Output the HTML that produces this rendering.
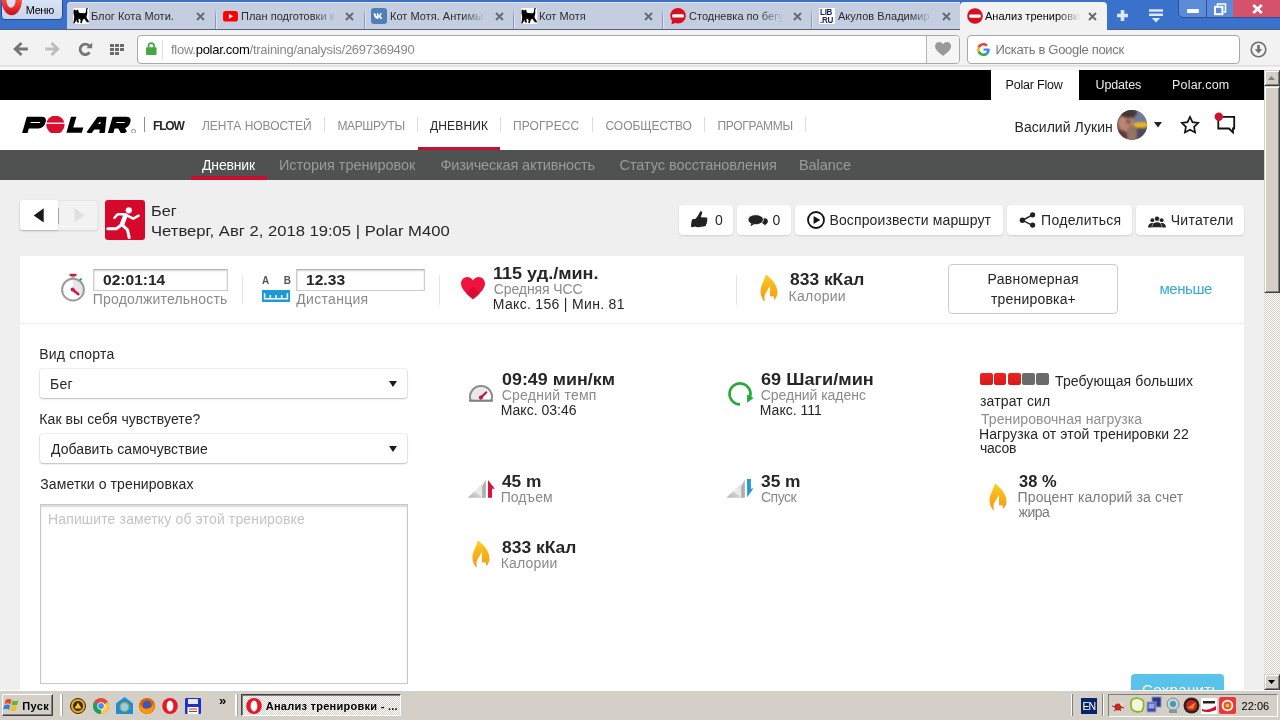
<!DOCTYPE html>
<html><head><meta charset="utf-8"><style>
*{box-sizing:border-box;margin:0;padding:0}
html,body{width:1280px;height:720px;overflow:hidden;background:#efefef;font-family:"Liberation Sans",sans-serif;color:#222}
.a{position:absolute}
.t{position:absolute;white-space:nowrap;line-height:1;opacity:.999}
svg{position:absolute;overflow:visible}
/* chrome */
#tabbar{left:0;top:0;width:1280px;height:30px;background:#3a72cb}
.tab{position:absolute;top:2px;height:27px;width:148px;background:#c4cee0;box-shadow:inset 0 1px 0 #dfe6f2}
.tab.act{background:#f2f2f2;height:28px;box-shadow:none;border-radius:4px 4px 0 0}
.tab .tt{opacity:.999;position:absolute;left:24px;top:6px;width:95px;height:17px;font-size:11px;letter-spacing:.02px;color:#2b2b2b;white-space:nowrap;line-height:17px;overflow:hidden}
.tab .fd{position:absolute;left:97px;top:6px;width:24px;height:17px;background:linear-gradient(90deg,rgba(196,206,224,0),#c4cee0)}
.tab.act .fd{background:linear-gradient(90deg,rgba(242,242,242,0),#f2f2f2)}
.tab svg.x{left:129px;top:10px}
.tab .fav{position:absolute;left:6px;top:6px;width:16px;height:16px}
#toolbar{left:0;top:29px;width:1280px;height:41px;background:linear-gradient(#f2f2f2 0,#f2f2f2 36px,#e2e2e2 36.5px,#e8e8e8 37.5px,#fafafa 38px,#f6f6f6 41px)}
.ibox{position:absolute;top:35px;height:28.500px;background:#fff;border:1px solid #a9a9a9;border-radius:4px}
/* page */
#black{left:0;top:70px;width:1264px;height:30px;background:#000}
#head{left:0;top:100px;width:1264px;height:50px;background:#fff}
#sub{left:0;top:150px;width:1264px;height:30px;background:#505252}
#task{left:0;top:690px;width:1280px;height:30px;background:#d4d0c8;border-top:1px solid #fff}
.btn{position:absolute;background:#fff;border-radius:4px;box-shadow:0 1px 2px rgba(0,0,0,.13);height:30px;top:205px}
.sep{position:absolute;width:1px;background:#dcdcdc}
.inp{position:absolute;background:#fff;border:1px solid #cdcdcd;border-top-color:#b4b4b4;box-shadow:inset 0 1px 2px rgba(0,0,0,.17),inset 1px 0 1px rgba(0,0,0,.05)}
.sel{position:absolute;left:40px;width:367px;height:29px;background:#fff;border-radius:3px;box-shadow:0 1px 2px rgba(0,0,0,.22),0 0 0 1px rgba(0,0,0,.05)}
.sel:after{content:"";position:absolute;right:10px;top:11.600px;border:4.300px solid transparent;border-top:6.200px solid #1c1c1c;border-bottom:0}
.sb{width:16px;background:#d4d0c8;border:1px solid;border-color:#d4d0c8 #404040 #404040 #d4d0c8;box-shadow:inset 1px 1px 0 #fff,inset -1px -1px 0 #808080}
.raised{background:#d4d0c8;border:1px solid;border-color:#fff #404040 #404040 #fff;box-shadow:inset -1px -1px 0 #808080}
.sunken{border:1px solid;border-color:#808080 #fff #fff #808080}
</style></head><body>
<!-- ======= browser chrome ======= -->
<div id="tabbar" class="a"></div>
<div id="toolbar" class="a"></div>
<!-- tabbar bottom line -->
<div class="a" style="left:0;top:29px;width:1280px;height:1px;background:#55617a"></div>
<!-- menu button -->
<div class="a" style="left:1px;top:-2px;width:62px;height:21.500px;background:linear-gradient(#dbe5f5,#c6d4ec);border:1px solid #274b96;border-radius:0 0 4px 4px;overflow:hidden"></div>
<svg style="left:0;top:0" width="24" height="18" viewBox="0 0 24 18"><defs><linearGradient id="og" x1="0" y1="0" x2="0" y2="1"><stop offset="0" stop-color="#ff4a3a"/><stop offset="1" stop-color="#c80f1e"/></linearGradient></defs><path fill-rule="evenodd" fill="url(#og)" d="M1.5 0a10.2 15.2 0 0 0 20.4 0zM6.4 0a4.6 7.8 0 0 0 9.2 0z"/></svg>
<!-- tabs -->
<div class="tab" style="left:67px;width:149px;border-radius:4px 0 0 0"><svg class="fav" viewBox="0 0 16 16" style="left:6px;top:6px" width="16" height="16"><use href="#cat"/></svg><div class="tt">Блог Кота Моти.</div><svg class="x" width="9" height="9"><use href="#cx"/></svg></div>
<div class="tab" style="left:216px;width:149px"><svg style="left:6.500px;top:9px" width="15" height="10.500" viewBox="0 0 17 12"><rect width="17" height="12" rx="3" fill="#f00"/><path d="M6.7 3.2v5.6L11.5 6z" fill="#fff"/></svg><div class="tt" style="left:25px">План подготовки к</div><div class="fd"></div><svg class="x" width="9" height="9"><use href="#cx"/></svg></div>
<div class="tab" style="left:365px;width:149px"><svg style="left:6px;top:6px" width="16" height="16" viewBox="0 0 16 16"><rect width="16" height="16" rx="3" fill="#4f7fb8"/><path d="M2.6 5.2h1.7c.3 1.6 1 2.7 1.6 3V5.2h1.6v2.3c.8-.1 1.5-1.2 1.8-2.3h1.6c-.3 1.4-1.200 2.3-1.700 2.700.6.400 1.600 1.300 2.100 3h-1.800c-.400-1.100-1.200-1.900-2-2v2h-.5c-2.600 0-4.100-1.800-4.400-5.700z" fill="#fff"/></svg><div class="tt" style="left:25px">Кот Мотя. Антимы</div><div class="fd"></div><svg class="x" width="9" height="9" style="left:130px"><use href="#cx"/></svg></div>
<div class="tab" style="left:514px;width:149px"><svg class="fav" viewBox="0 0 16 16" style="left:7px;top:6px" width="16" height="16"><use href="#cat"/></svg><div class="tt" style="left:25px">Кот Мотя</div><svg class="x" width="9" height="9" style="left:130px"><use href="#cx"/></svg></div>
<div class="tab" style="left:663px;width:149px"><svg style="left:7px;top:6px" width="16" height="17" viewBox="0 0 16 17"><use href="#pf"/></svg><div class="tt" style="left:26px">Стодневка по бегу</div><div class="fd"></div><svg class="x" width="9" height="9" style="left:130px"><use href="#cx"/></svg></div>
<div class="tab" style="left:812px;width:148px"><div class="a" style="left:7px;top:6px;width:16px;height:16px;background:#fff"></div><div class="t" style="left:7.5px;top:6px;font-size:8.5px;font-weight:bold;color:#1b1f5a;letter-spacing:-.3px;line-height:8px;transform:scaleX(.95);transform-origin:0 0">LIB<br>.RU</div><div class="tt" style="left:26px">Акулов Владимир I</div><div class="fd"></div><svg class="x" width="9" height="9" style="left:130px"><use href="#cx"/></svg></div>
<div class="tab act" style="left:960px;width:147px"><svg style="left:7px;top:6px" width="16" height="16" viewBox="0 0 16 16"><circle cx="8" cy="8" r="7.800" fill="#d80f1e"/><rect x="2.200" y="6.400" width="11.600" height="3.400" rx="1.200" fill="#fff"/></svg><div class="tt" style="left:25px;color:#000">Анализ тренировки</div><div class="fd"></div><svg class="x" width="9" height="9" style="left:128px"><use href="#cx"/></svg></div>
<div class="a" style="left:215px;top:8px;width:1px;height:21px;background:linear-gradient(rgba(140,152,180,0),#8c98b4 40%)"></div><div class="a" style="left:216px;top:8px;width:1px;height:21px;background:linear-gradient(rgba(220,227,240,0),#dce3f0 40%)"></div><div class="a" style="left:364px;top:8px;width:1px;height:21px;background:linear-gradient(rgba(140,152,180,0),#8c98b4 40%)"></div><div class="a" style="left:365px;top:8px;width:1px;height:21px;background:linear-gradient(rgba(220,227,240,0),#dce3f0 40%)"></div><div class="a" style="left:513px;top:8px;width:1px;height:21px;background:linear-gradient(rgba(140,152,180,0),#8c98b4 40%)"></div><div class="a" style="left:514px;top:8px;width:1px;height:21px;background:linear-gradient(rgba(220,227,240,0),#dce3f0 40%)"></div><div class="a" style="left:662px;top:8px;width:1px;height:21px;background:linear-gradient(rgba(140,152,180,0),#8c98b4 40%)"></div><div class="a" style="left:663px;top:8px;width:1px;height:21px;background:linear-gradient(rgba(220,227,240,0),#dce3f0 40%)"></div><div class="a" style="left:811px;top:8px;width:1px;height:21px;background:linear-gradient(rgba(140,152,180,0),#8c98b4 40%)"></div><div class="a" style="left:812px;top:8px;width:1px;height:21px;background:linear-gradient(rgba(220,227,240,0),#dce3f0 40%)"></div>
<svg width="0" height="0"><defs>
<path id="cx" d="M1 1L8 8M8 1L1 8" stroke="#656a75" stroke-width="1.900" fill="none"/>
<g id="cat"><rect width="16" height="16" fill="#fff"/><path d="M.9 1.200l1.500 1.100 1.500-.1 1.300-1 .2 2.400 1.200 1.300 4.300.3c1.200 0 1.900-.6 2-1.800l.2-2.300c.1-.8.600-1.200 1.400-1.100l.5.900c-.600 0-.8.400-.8 1l.1 3.200c0 1.300-.3 2.400-.9 3.200l.6 2.300 2 2.900-.6 1-1.400-.3-2.200-2.700-.6-1-1.300 1.300-1.200 3.500-1.400-.2.300-2.900-.6-1.300-1.400-.1-.2 1.800.8 1.700-1.300.4-1.300-1.300-.3-2-.8 2.400-1.400 1.900-.9-.5.700-2.900.3-3.700C.8 6.500.4 5.200.5 3.800z" fill="#000"/></g>
<g id="pf"><circle cx="8" cy="7.800" r="7.800" fill="#d80f1e"/><path d="M2 12l-.5 4.500 4.500-2z" fill="#d80f1e"/><rect x="2.200" y="6.200" width="11.600" height="3.400" rx="1.200" fill="#fff"/></g>
</defs></svg>
<!-- new tab + menu -->
<svg style="left:1117px;top:10px" width="11" height="11"><path d="M5.500 0v11M0 5.500h11" stroke="#dbe8fb" stroke-width="3.600"/></svg>
<svg style="left:1149px;top:9px" width="14" height="14"><path d="M0 1.500h14M0 5.700h14" stroke="#dbe8fb" stroke-width="2.600"/><path d="M2.800 9h8.400L7 13.400z" fill="#dbe8fb"/></svg>
<!-- window controls -->
<div class="a" style="left:1178px;top:-2px;width:102px;height:20px;background:#5a8bd6;border:1px solid #2c4f98;border-radius:0 0 0 5px"></div>
<div class="a" style="left:1206px;top:0;width:1px;height:18px;background:#2c4f98"></div>
<div class="a" style="left:1233px;top:0;width:47px;height:17px;background:#d4526b"></div>
<svg style="left:1187px;top:9px" width="12" height="4"><rect width="12" height="4" rx="1" fill="#fff"/></svg>
<svg style="left:1214px;top:3px" width="12" height="12"><path d="M3.500 3V1h8v8h-2" fill="none" stroke="#fff" stroke-width="1.600"/><rect x="1" y="3.800" width="7.400" height="7.400" fill="none" stroke="#fff" stroke-width="2"/></svg>
<svg style="left:1252px;top:4px" width="11" height="10"><path d="M1.200 1L9.800 9M9.800 1L1.200 9" stroke="#fff" stroke-width="2.800"/></svg>
<!-- toolbar icons -->
<svg style="left:14px;top:42px" width="14" height="14"><path d="M7.500 1L1.200 7l6.300 6M1.800 7h12" fill="none" stroke="#757575" stroke-width="2.800" stroke-linejoin="miter"/></svg>
<svg style="left:45px;top:42px" width="14" height="14"><path d="M6.500 1l6.300 6-6.300 6M12.200 7h-12" fill="none" stroke="#bdbdbd" stroke-width="2.800"/></svg>
<svg style="left:78px;top:42px" width="15" height="15"><path d="M11.600 10.300a5.200 5.200 0 1 1-.3-6.300" fill="none" stroke="#757575" stroke-width="2.800"/><path d="M8.300 6.200h5.900V.4z" fill="#757575"/></svg>
<svg style="left:110px;top:44px" width="14" height="11" fill="#6b6b6b"><rect x="0" y="0" width="4" height="3"/><rect x="5" y="0" width="4" height="3"/><rect x="10" y="0" width="4" height="3"/><rect x="0" y="4" width="4" height="3"/><rect x="5" y="4" width="4" height="3"/><rect x="10" y="4" width="4" height="3"/><rect x="0" y="8" width="4" height="3"/><rect x="5" y="8" width="4" height="3"/></svg>
<!-- url box -->
<div class="ibox" style="left:136.500px;width:823.500px"></div>
<svg style="left:146px;top:41.800px" width="10.600" height="13.400" viewBox="0 0 11 14"><path d="M2.600 6V4a2.900 2.900 0 0 1 5.800 0v2" fill="none" stroke="#45a845" stroke-width="1.800"/><rect x="0" y="5.600" width="11" height="8" rx="1" fill="#45a845"/></svg>
<div class="a" style="left:162px;top:40px;width:1px;height:20px;background:#e0e0e0"></div>
<div class="a" style="left:926px;top:36px;width:1px;height:27px;background:#b4b4b4"></div>
<div class="a" style="left:927px;top:36px;width:32px;height:26.500px;background:#f5f5f5;border-radius:0 3px 3px 0"></div>
<svg style="left:935px;top:41.800px" width="16.200" height="14" viewBox="0 0 16 14"><path d="M8 14C3 10 0 7.500 0 4.200 0 1.800 1.800 0 4.100 0 5.700 0 7.200.9 8 2.300 8.800.9 10.300 0 11.900 0 14.200 0 16 1.800 16 4.200 16 7.500 13 10 8 14z" fill="#9a9a9a"/></svg>
<!-- search box -->
<div class="ibox" style="left:967px;width:273px"></div>
<svg style="left:977px;top:43px" width="13" height="13" viewBox="0 0 48 48"><path fill="#EA4335" d="M24 9.500c3.540 0 6.710 1.220 9.210 3.600l6.850-6.850C35.900 2.380 30.470 0 24 0 14.620 0 6.510 5.380 2.560 13.220l7.980 6.190C12.430 13.720 17.740 9.500 24 9.500z"/><path fill="#4285F4" d="M46.980 24.550c0-1.570-.15-3.090-.38-4.550H24v9.020h12.940c-.58 2.960-2.260 5.480-4.780 7.180l7.730 6c4.510-4.180 7.090-10.360 7.090-17.650z"/><path fill="#FBBC05" d="M10.530 28.590c-.48-1.450-.76-2.990-.76-4.590s.27-3.140.76-4.590l-7.980-6.190C.92 16.460 0 20.120 0 24c0 3.880.92 7.540 2.560 10.780l7.970-6.190z"/><path fill="#34A853" d="M24 48c6.480 0 11.930-2.130 15.890-5.810l-7.730-6c-2.150 1.450-4.920 2.300-8.160 2.300-6.260 0-11.570-4.220-13.470-9.910l-7.980 6.190C6.510 42.620 14.620 48 24 48z"/></svg>
<!-- download -->
<svg style="left:1250px;top:41px" width="17" height="17"><circle cx="8.500" cy="8.500" r="7.300" fill="none" stroke="#6f6f6f" stroke-width="1.600"/><path d="M7.200 4h2.600v4.200h2.400L8.500 12.500 4.800 8.200h2.400z" fill="#6f6f6f"/></svg>

<!-- ======= page ======= -->
<div id="black" class="a"></div>
<div id="head" class="a"></div>
<div id="sub" class="a"></div>
<!-- black bar tab -->
<div class="a" style="left:991px;top:70px;width:88px;height:30px;background:#fff"></div>
<!-- nav separators -->
<div class="sep" style="left:144px;top:117px;height:15px;background:#8e8e8e"></div>
<div class="sep" style="left:324px;top:117px;height:15px"></div>
<div class="sep" style="left:417px;top:117px;height:15px"></div>
<div class="sep" style="left:500px;top:117px;height:15px"></div>
<div class="sep" style="left:592px;top:117px;height:15px"></div>
<div class="sep" style="left:704px;top:117px;height:15px"></div>
<div class="sep" style="left:805px;top:117px;height:15px"></div>
<div class="a" style="left:418px;top:146.500px;width:82px;height:3.500px;background:#c5102f"></div>
<div class="a" style="left:190.500px;top:176.400px;width:76.500px;height:3.600px;background:#c5102f"></div>
<!-- polar logo -->
<svg style="left:22px;top:116px;overflow:hidden" width="115" height="17.3" viewBox="0 0 115 17.3"><g transform="translate(4.800 0) skewX(-16)" fill="none" stroke="#000" stroke-width="5.400" stroke-linejoin="miter"><path d="M2.900 17.200V3.400H15Q17.900 3.400 17.900 6.500T15 9.700H5"/><path d="M47.100 .7V14.100H59.800"/><path d="M66.800 17.200L72.700 3.400H77.700L80.200 17.200M70 10.700H79"/><path d="M88.700 17.200V3.400H99.700Q102.600 3.400 102.600 6.500T99.700 9.700H91M97 10.500L102.500 17.200"/></g><circle cx="33.400" cy="8.800" r="9.200" fill="#d8102e"/><rect x="23.800" y="6.600" width="19.500" height="1.300" fill="#fff"/><circle cx="111.600" cy="15.300" r="2" fill="none" stroke="#444" stroke-width=".6"/></svg>
<!-- avatar -->
<div class="a" style="left:1117px;top:110px;width:30px;height:30px;border-radius:50%;overflow:hidden;background:#6e5650"><div class="a" style="left:0;top:0;width:30px;height:30px;filter:blur(1.200px)"><div class="a" style="left:17px;top:-3px;width:16px;height:17px;background:#6f7d9c"></div><div class="a" style="left:18px;top:16px;width:14px;height:12px;background:#4b4a5c"></div><div class="a" style="left:16px;top:11.500px;width:16px;height:6.500px;border-radius:45%;background:#e9b424"></div><div class="a" style="left:1px;top:4px;width:16px;height:18px;border-radius:50%;background:#b98672"></div><div class="a" style="left:3px;top:-2px;width:17px;height:10px;border-radius:50%;background:#46363a"></div><div class="a" style="left:10px;top:15px;width:10px;height:16px;border-radius:45%;background:#927566"></div><div class="a" style="left:-2px;top:20px;width:12px;height:12px;border-radius:50%;background:#64383a"></div><div class="a" style="left:9px;top:9px;width:5px;height:5px;border-radius:50%;background:#8a5a50"></div></div></div>
<svg style="left:1154px;top:122px" width="8" height="6"><path d="M0 0H8L4 5.600z" fill="#222"/></svg>
<svg style="left:1180px;top:115px" width="20" height="19" viewBox="0 0 20 19"><path d="M10 1.900l2.500 5.200 5.700.8-4.100 4 1 5.600L10 14.800l-5.100 2.700 1-5.600-4.100-4 5.700-.8z" fill="none" stroke="#111" stroke-width="1.700" stroke-linejoin="miter"/></svg>
<svg style="left:1214px;top:112px" width="23" height="23" viewBox="0 0 23 23"><path d="M4.300 8V16.500H15L19 20.400V16.500H20.200V4.800H9" fill="none" stroke="#111" stroke-width="1.800"/><circle cx="4.800" cy="4.800" r="4.200" fill="#d0102e"/></svg>
<!-- white panel -->
<div class="a" style="left:20px;top:256px;width:1224px;height:434px;background:#fff"></div>
<div class="a" style="left:20px;top:323px;width:1224px;height:1px;background:#ececec"></div>
<!-- prev/next -->
<div class="a" style="left:20px;top:200px;width:78px;height:30px;background:#f2f2f2;border-radius:3px;box-shadow:0 1px 2px rgba(0,0,0,.13);border-top:1px solid #e6e6e6;border-right:1px solid #e9e9e9"></div><div class="a" style="left:58px;top:226px;width:39px;height:1px;background:#fafafa"></div>
<div class="a" style="left:20px;top:200px;width:38px;height:30px;background:#fff;border-radius:3px 0 0 3px;box-shadow:0 1px 2px rgba(0,0,0,.15)"></div>
<div class="a" style="left:58px;top:208px;width:1px;height:16px;background:#a2a2a2"></div><svg style="left:33px;top:207.500px" width="12" height="15"><path d="M10.700 0.300V14.500L0.700 7.400Z" fill="#1a1a1a"/></svg>
<svg style="left:74px;top:207.500px" width="12" height="15"><path d="M0.500 0.300V14.500L10.700 7.400Z" fill="#e0e0e0"/></svg>
<!-- sport icon -->
<div class="a" style="left:105px;top:200px;width:40px;height:40px;background:#d6092c;border-radius:3px"></div>
<svg style="left:105px;top:200px" width="40" height="40" viewBox="0 0 40 40" fill="none" stroke="#fff" stroke-linecap="round" stroke-linejoin="round"><circle cx="23.800" cy="10.300" r="3.100" fill="#fff" stroke="none"/><path d="M20.500 15.300L17 24.500" stroke-width="4.600"/><path d="M18.500 14.300H12.600L9.400 17.800" stroke-width="2.500"/><path d="M22.300 15.600L28.300 18.700 33.700 15.700" stroke-width="2.500"/><path d="M16.300 25L11.300 28.700H2.800" stroke-width="3"/><path d="M18 25.600L22.500 29.900 24.200 37.600" stroke-width="3"/></svg>

<!-- action buttons -->
<div class="btn" style="left:679px;width:54px"></div>
<div class="btn" style="left:737px;width:54px"></div>
<div class="btn" style="left:795px;width:208px"></div>
<div class="btn" style="left:1007px;width:125px"></div>
<div class="btn" style="left:1136px;width:108px"></div>
<!-- thumb -->
<svg style="left:691px;top:211px" width="17" height="18" viewBox="0 0 17 18"><path d="M9.400 0.300c1.300-.5 2 .4 1.700 1.600L9.800 6.300l5.400.3c1.400.1 1.700 1.700.6 2.300.9.600.7 1.900-.2 2.300.6.700.3 1.900-.6 2.100.4.900-.1 1.900-1.200 2l-6.200.9c-1.600.2-2.700-.2-3.600-.7l-2.700.8C.4 16.600-.2 15.200.1 13.200l.6-3.400c.2-1.200.9-1.800 2-1.800h1.600C6.100 6.300 7.600 3.500 9.400.3z" fill="#222"/></svg>
<!-- comments -->
<svg style="left:748px;top:214px" width="20" height="13" viewBox="0 0 20 13"><circle cx="16.800" cy="7.300" r="3" fill="#222"/><path d="M17 9.500l1.300 2.300-2.800-1.500z" fill="#222"/><ellipse cx="7.700" cy="5.700" rx="7.700" ry="5" fill="#222" stroke="#fff" stroke-width=".8"/><path d="M3.200 9l-.6 3.200 3.400-2z" fill="#222"/></svg>
<!-- play -->
<svg style="left:807px;top:211px" width="18" height="18" viewBox="0 0 18 18"><circle cx="9" cy="9" r="8" fill="none" stroke="#111" stroke-width="1.800"/><path d="M6.600 5v8L13.300 9z" fill="#111"/></svg>
<!-- share -->
<svg style="left:1019px;top:212px" width="17" height="16" viewBox="0 0 17 16"><path d="M13.500 2.800L3.500 8.300l10 5" fill="none" stroke="#222" stroke-width="1.500"/><circle cx="3.400" cy="8.300" r="2.700" fill="#222"/><circle cx="13.600" cy="2.800" r="2.600" fill="#222"/><circle cx="13.600" cy="13.100" r="2.600" fill="#222"/></svg>
<!-- readers -->
<svg style="left:1148px;top:216px" width="18" height="12" viewBox="0 0 18 12" fill="#222"><circle cx="4.300" cy="4.200" r="1.900"/><path d="M0 11.500c.3-3 1.500-4.500 4.300-4.500 1.200 0 2 .4 2.600 1L5 11.500z"/><circle cx="13.700" cy="4.200" r="1.900"/><path d="M18 11.500c-.3-3-1.500-4.500-4.300-4.500-1.200 0-2 .4-2.600 1l1.900 3.500z"/><circle cx="9" cy="2.700" r="2.500" stroke="#fff" stroke-width=".5"/><path d="M3.800 11.500c.4-3.600 2-5.500 5.200-5.500s4.800 1.900 5.200 5.500z" stroke="#fff" stroke-width=".5"/></svg>

<!-- summary -->
<div class="inp" style="left:93px;top:269px;width:135px;height:22px"></div>
<div class="inp" style="left:296px;top:269px;width:129px;height:22px"></div>
<div class="sep" style="left:242px;top:275px;height:29px;background:#e4e4e4"></div>
<div class="sep" style="left:439px;top:275px;height:30px;background:#e4e4e4"></div>
<div class="sep" style="left:736px;top:275px;height:30px;background:#e4e4e4"></div>
<div class="a" style="left:948px;top:264px;width:170px;height:50px;background:#fff;border:1px solid #cdcdcd;border-radius:4px"></div>
<svg width="0" height="0"><defs>
<linearGradient id="fg" x1="0" y1="0" x2="0" y2="1"><stop offset="0" stop-color="#f7d21e"/><stop offset=".45" stop-color="#f9b41a"/><stop offset="1" stop-color="#f59a18"/></linearGradient>
<path id="flame" d="M5.800 .4C4.600 5.500 2.600 8.800 1.300 12.500-.5 17.500.6 22.800 4 27c.4.300.9.200.9-.3-.9-3.200-.4-6 1.500-8.800 1.600-2.400 2.800-4.200 3.300-6.100.6 2.300.3 5 .2 7.400-.1 1.500 0 2.700.6 3.300l3.300-.2c.2 1.200 0 2.500.5 3.700 2.600-2.600 3.800-6.200 2.900-10.300C16 9.600 11.500 4.400 5.800.4z" fill="url(#fg)"/>
</defs></svg>
<!-- stopwatch -->
<svg style="left:60px;top:272px" width="27" height="31" viewBox="0 0 27 31"><path d="M13 17.700V6.800A10.900 10.900 0 0 1 21.700 24.200z" fill="#e6e6e6"/><circle cx="13" cy="17.700" r="10.900" fill="none" stroke="#9b9b9b" stroke-width="2"/><rect x="11.400" y="3.800" width="3.200" height="3.200" fill="#a8a8a8"/><rect x="9.600" y="1.800" width="6.800" height="2.400" rx=".5" fill="#c4204e"/><path d="M19.800 8.200l1.800-1.600" stroke="#2a9ab0" stroke-width="2.200"/><circle cx="12.600" cy="17.600" r="2" fill="#c4204e"/><path d="M12.600 17.600l5.700 4.600" stroke="#c4204e" stroke-width="2.600" stroke-linecap="round"/></svg>
<!-- ruler -->
<div class="a" style="left:262px;top:290px;width:28px;height:12px;background:#1d9ad6"></div>
<svg style="left:262px;top:290px" width="28" height="12"><path d="M2.600 3.300V8.800H25.400V3.300M8.300 5V8.800M14 5V8.800M19.700 5V8.800" fill="none" stroke="#fff" stroke-width="1.500"/></svg>
<!-- heart -->
<svg style="left:461px;top:276.500px" width="24" height="22.500" viewBox="0 0 24 22.500"><defs><clipPath id="hc"><path d="M12 22.500C4 15.500 0 11.500 0 6.600 0 2.900 2.800 0 6.300 0 8.700 0 10.900 1.400 12 3.500 13.100 1.400 15.300 0 17.700 0 21.200 0 24 2.900 24 6.600c0 4.900-4 8.900-12 15.900z"/></clipPath></defs><g clip-path="url(#hc)"><rect width="24" height="23" fill="#f0123e"/><path d="M12 9.500l11 11H1z" fill="#d60e35"/></g></svg>
<!-- flame summary -->
<svg style="left:760px;top:274px" width="19" height="28" viewBox="0 0 19 28"><use href="#flame"/></svg>

<!-- form -->
<div class="sel" style="top:369px"></div>
<div class="sel" style="top:434px"></div>
<div class="inp" style="left:40px;top:504px;width:368px;height:180px;box-shadow:inset 0 2px 2px rgba(0,0,0,.16);border-color:#c8c8c8"></div>
<!-- load squares -->
<div class="a" style="left:980px;top:373.200px;width:12.600px;height:12.300px;background:linear-gradient(#ee2222,#d61a1a);border-radius:2px"></div>
<div class="a" style="left:993.8px;top:373.200px;width:12.600px;height:12.300px;background:linear-gradient(#ee2222,#d61a1a);border-radius:2px"></div>
<div class="a" style="left:1008px;top:373.200px;width:12.600px;height:12.300px;background:linear-gradient(#ee2222,#d61a1a);border-radius:2px"></div>
<div class="a" style="left:1022.4px;top:373.200px;width:12.600px;height:12.300px;background:#6a6a6a;border-radius:2px"></div>
<div class="a" style="left:1036.2px;top:373.200px;width:12.600px;height:12.300px;background:#6a6a6a;border-radius:2px"></div>
<!-- gauge -->
<svg style="left:468px;top:384px" width="26" height="19" viewBox="0 0 26 19"><path d="M13 13.500L2.600 16.200A11 11 0 0 1 19.500 4.200z" fill="#e9e9e9"/><path d="M2.640 16.700A11 11 0 1 1 23.360 16.700" fill="none" stroke="#8c8c8c" stroke-width="2"/><path d="M1.200 16.700H24.800" stroke="#808080" stroke-width="2.200"/><circle cx="12.900" cy="13.600" r="2.100" fill="#c4184a"/><path d="M12.900 13.600L18.300 8.300" stroke="#c4184a" stroke-width="2.200" stroke-linecap="round"/></svg>
<!-- cadence -->
<svg style="left:727px;top:381px" width="27" height="26" viewBox="0 0 27 26"><path d="M13 23.400A10.500 10.500 0 1 1 22.900 16.400" fill="none" stroke="#25ab35" stroke-width="2.600"/><path d="M20 13.500l6.600 3.600-6.400 4.700z" fill="#25ab35"/></svg>
<!-- ascent -->
<svg style="left:467px;top:479px" width="29" height="20" viewBox="0 0 29 20"><defs><linearGradient id="tg" x1="0" y1="1" x2=".6" y2=".2"><stop offset="0" stop-color="#b4b4b4"/><stop offset=".45" stop-color="#cfcfcf"/><stop offset=".55" stop-color="#ececec"/><stop offset="1" stop-color="#e4e4e4"/></linearGradient></defs><path d="M.8 18.700L18.800 1V18.700z" fill="url(#tg)"/><path d="M15.200 8V18.700H18.800V1z" fill="#aab0ad"/><path d="M21 1l6.800 8.700H25V18.700H21z" fill="#e0113c"/></svg>
<!-- descent -->
<svg style="left:726px;top:478px" width="29" height="21" viewBox="0 0 29 21"><path d="M.3 19.700L18.800 2V19.700z" fill="url(#tg)"/><path d="M15.200 9V19.700H18.800V2z" fill="#aeaeae"/><path d="M21 1H24.900V10.700L27.500 10.200 21.200 19.200z" fill="#2499d9"/></svg>
<!-- flames -->
<svg style="left:988.500px;top:483px" width="19" height="28" viewBox="0 0 19 28"><use href="#flame"/></svg>
<svg style="left:471.500px;top:540px" width="19" height="28" viewBox="0 0 19 28"><use href="#flame"/></svg>

<!-- save button -->
<div class="a" style="left:1131px;top:674px;width:93px;height:16px;background:#5ac3ec;border-radius:4px 4px 0 0;overflow:hidden"><div class="t" style="left:11px;top:8px;font-size:15px;color:#fff;letter-spacing:.35px">Сохранить</div></div>

<!-- scrollbar -->
<div class="a" style="left:1264px;top:70px;width:16px;height:620px;background-color:#ebe9e4;background-image:conic-gradient(#fff 25%,#d4d0c8 0 50%,#fff 0 75%,#d4d0c8 0);background-size:2px 2px"></div>
<div class="a sb" style="left:1264px;top:70px;height:16px"></div>
<div class="a sb" style="left:1264px;top:86px;height:207px"></div>
<div class="a sb" style="left:1264px;top:674px;height:16px"></div>
<svg style="left:1268px;top:76px" width="7" height="4"><path d="M3.500 0L7 4H0z" fill="#808080"/></svg>
<svg style="left:1268px;top:680px" width="7" height="4"><path d="M3.500 4L7 0H0z" fill="#000"/></svg>

<div id="task" class="a"></div>
<!-- start -->
<div class="a raised" style="left:2px;top:694px;width:51px;height:22px"></div>
<svg style="left:3.500px;top:696px" width="18" height="18" viewBox="0 0 15 15"><path d="M1.500 3.200c1.600-.9 3.200-.9 4.800 0l-1 3.600c-1.600-.9-3.200-.9-4.800 0z" fill="#e8452c"/><path d="M7.200 3.700c1.600.9 3.200.9 4.800 0l-1 3.600c-1.600.9-3.200.9-4.800 0z" fill="#6ab42d"/><path d="M.3 7.800c1.600-.9 3.200-.9 4.800 0l-1 3.600c-1.600-.9-3.200-.9-4.800 0z" fill="#2c7de8"/><path d="M6 8.300c1.600.9 3.200.9 4.800 0l-1 3.600c-1.600.9-3.200.9-4.800 0z" fill="#f4c20d"/></svg>
<div class="a" style="left:60px;top:694px;width:3px;height:22px;background:#fff;border-right:1px solid #a8a49c"></div>
<!-- quick launch -->
<svg style="left:70px;top:698px" width="16" height="16"><circle cx="8" cy="8" r="7.500" fill="#e7a81a" stroke="#3a2a08" stroke-width="1"/><circle cx="8" cy="8" r="5" fill="#3a2a08"/><path d="M8 4.500l3.500 6h-7z" fill="#f3c33c"/></svg>
<svg style="left:93px;top:698px" width="16" height="16" viewBox="0 0 16 16"><circle cx="8" cy="8" r="8" fill="#dd4b3e"/><path d="M8 8L1.100 4A8 8 0 0 0 8 16z" fill="#1aa260"/><path d="M8 8v8a8 8 0 0 0 6.900-12z" fill="#ffcd40"/><circle cx="8" cy="8" r="3.700" fill="#fff"/><circle cx="8" cy="8" r="2.900" fill="#4c8bf5"/></svg>
<svg style="left:116px;top:697px" width="17" height="17" viewBox="0 0 17 17"><path d="M8.500 0L17 6.500V17H0V6.500z" fill="#1b8fd6"/><circle cx="8.500" cy="10" r="4.300" fill="#8fd0f0" stroke="#c8a020" stroke-width="1.300"/></svg>
<svg style="left:139px;top:698px" width="16" height="16"><circle cx="8" cy="8" r="8" fill="#e66000"/><circle cx="8" cy="7" r="4.500" fill="#3a56b8"/><path d="M1 6c2 4 5 6 10 4 2-1 3-3 3-5 2 4 1 9-4 10.500C4 17 0 12 1 6z" fill="#ff9500"/></svg>
<svg style="left:162px;top:698px" width="16" height="16"><ellipse cx="8" cy="8" rx="7.800" ry="8" fill="#e81828"/><ellipse cx="8" cy="8" rx="3.400" ry="5.400" fill="#fff"/></svg>
<svg style="left:185px;top:698px" width="16" height="16"><rect width="16" height="16" rx="1" fill="#2030c0"/><rect x="3" y="1" width="10" height="5" fill="#e8e8f4"/><rect x="2.500" y="9" width="11" height="7" fill="#fff"/><path d="M4 11h8M4 13.500h8" stroke="#c03030" stroke-width="1"/></svg>
<div class="t" style="left:219px;top:694px;font-size:13px;font-weight:bold;color:#000">»</div>
<div class="a" style="left:235px;top:694px;width:3px;height:22px;background:#fff;border-right:1px solid #a8a49c"></div>
<!-- task button (pressed) -->
<div class="a" style="left:241px;top:694px;width:160px;height:22px;border:1px solid;border-color:#404040 #fff #fff #404040;box-shadow:inset 1px 1px 0 #808080;background-color:#ebe9e4;background-image:conic-gradient(#fff 25%,#d4d0c8 0 50%,#fff 0 75%,#d4d0c8 0);background-size:2px 2px"></div>
<svg style="left:246px;top:698px" width="16" height="16"><ellipse cx="8" cy="8" rx="7.800" ry="8" fill="#e81828"/><ellipse cx="8" cy="8" rx="3.400" ry="5.400" fill="#fff"/></svg>
<!-- right -->
<div class="a" style="left:1071px;top:694px;width:2px;height:22px;border-left:1px solid #fff;border-right:1px solid #808080"></div>
<div class="a" style="left:1081px;top:698px;width:16px;height:16px;background:#0a246a"></div>
<div class="a" style="left:1102px;top:694px;width:2px;height:22px;border-left:1px solid #808080;border-right:1px solid #fff"></div>
<div class="a sunken" style="left:1108px;top:694px;width:170px;height:23px"></div>
<!-- tray icons -->
<svg style="left:1111px;top:698px" width="16" height="16"><circle cx="7" cy="9" r="3.500" fill="#c8281e"/><circle cx="11" cy="6" r="2" fill="#e8d8d0"/><path d="M1 8l4 1M3 13l3-2M10 13l-2-2M13 10l-3-1" stroke="#a02018" stroke-width="1"/></svg>
<svg style="left:1129px;top:697px" width="17" height="17"><path d="M3 2.500c4-2 8-1.500 11 1 1 3 1 7-1 10.500-3 1.500-7 1-10-1.500C1.500 9 1.500 5.500 3 2.500z" fill="#f4f6e4" stroke="#8fb81e" stroke-width="1.800"/></svg>
<svg style="left:1146px;top:696px" width="17" height="18"><rect x="6" y="1" width="9" height="10" fill="#2a3a8c" stroke="#8a90b8" stroke-width="1"/><rect x="1" y="6" width="9" height="10" fill="#3a4aa0" stroke="#a0a6c8" stroke-width="1"/><rect x="2.500" y="7.500" width="6" height="5" fill="#98a4e0"/></svg>
<svg style="left:1165px;top:697px" width="16" height="17"><circle cx="8" cy="7" r="6" fill="#c8d4d8" stroke="#7a8a90" stroke-width="1"/><circle cx="8" cy="7" r="3" fill="#38a0b0"/><rect x="4" y="13" width="8" height="3" fill="#8a9498"/></svg>
<svg style="left:1183px;top:697px" width="17" height="17"><circle cx="8.500" cy="8.500" r="8" fill="#30201c"/><circle cx="8.500" cy="8.500" r="5.500" fill="#c82818"/><path d="M4 11l9-6-3 7z" fill="#f08040"/></svg>
<svg style="left:1201px;top:698px" width="16" height="16"><rect width="16" height="16" fill="#fff"/><path d="M1 11c4 2 9 0 14-3v4c-5 2-10 3-14 1z" fill="#d0102e"/><rect x="2" y="3" width="12" height="2.500" fill="#222"/></svg>
<svg style="left:1219px;top:697px" width="17" height="17"><rect width="17" height="17" rx="2" fill="#e83838"/><circle cx="8.500" cy="8.500" r="5.800" fill="#fff"/><circle cx="8.500" cy="8.500" r="4" fill="#e85a28"/><circle cx="8.500" cy="8.500" r="1.800" fill="#f8c840"/></svg>

<div class="t" style="left:25.80px;top:5.00px;font-size:11px;color:#000;letter-spacing:-0.426px">Меню</div>
<div class="t" style="left:171.00px;top:43.00px;font-size:13px;color:#888;letter-spacing:-0.271px">flow.<span style="color:#000">polar.com</span>/training/analysis/2697369490</div>
<div class="t" style="left:995.50px;top:43.00px;font-size:13px;color:#777;letter-spacing:-0.309px">Искать в Google поиск</div>
<div class="t" style="left:1005.50px;top:79.00px;font-size:12.5px;color:#111;letter-spacing:-0.191px">Polar Flow</div>
<div class="t" style="left:1095.50px;top:79.00px;font-size:12.5px;color:#ececec;letter-spacing:-0.135px">Updates</div>
<div class="t" style="left:1172.00px;top:79.00px;font-size:12.5px;color:#ececec;letter-spacing:0.204px">Polar.com</div>
<div class="t" style="left:153.00px;top:120.00px;font-size:12px;color:#262626;letter-spacing:-1.165px;font-weight:bold">FLOW</div>
<div class="t" style="left:202.00px;top:120.00px;font-size:12px;color:#8a8a8a;letter-spacing:-0.027px">ЛЕНТА НОВОСТЕЙ</div>
<div class="t" style="left:337.50px;top:120.00px;font-size:12px;color:#8a8a8a;letter-spacing:-0.385px">МАРШРУТЫ</div>
<div class="t" style="left:430.00px;top:120.00px;font-size:12px;color:#262626;letter-spacing:0.151px">ДНЕВНИК</div>
<div class="t" style="left:513.00px;top:120.00px;font-size:12px;color:#8a8a8a;letter-spacing:0.090px">ПРОГРЕСС</div>
<div class="t" style="left:605.50px;top:120.00px;font-size:12px;color:#8a8a8a;letter-spacing:-0.045px">СООБЩЕСТВО</div>
<div class="t" style="left:717.50px;top:120.00px;font-size:12px;color:#8a8a8a;letter-spacing:-0.299px">ПРОГРАММЫ</div>
<div class="t" style="left:1014.50px;top:120.00px;font-size:14px;color:#262626;letter-spacing:0.047px">Василий Лукин</div>
<div class="t" style="left:202.00px;top:158.00px;font-size:14px;color:#fff;letter-spacing:-0.165px">Дневник</div>
<div class="t" style="left:279.00px;top:158.00px;font-size:14.5px;color:#9a9a9a;letter-spacing:-0.051px">История тренировок</div>
<div class="t" style="left:440.50px;top:158.00px;font-size:14.5px;color:#9a9a9a;letter-spacing:-0.166px">Физическая активность</div>
<div class="t" style="left:619.50px;top:158.00px;font-size:14.5px;color:#9a9a9a;letter-spacing:-0.054px">Статус восстановления</div>
<div class="t" style="left:799.00px;top:158.00px;font-size:14.5px;color:#9a9a9a;letter-spacing:-0.056px">Balance</div>
<div class="t" style="left:150.71px;top:203.00px;font-size:15px;color:#262626;transform:scaleX(1.0869);transform-origin:0 0">Бег</div>
<div class="t" style="left:150.69px;top:223.00px;font-size:15px;color:#262626;transform:scaleX(1.1084);transform-origin:0 0">Четверг, Авг 2, 2018 19:05 | Polar M400</div>
<div class="t" style="left:715.00px;top:213.00px;font-size:14px;color:#262626;letter-spacing:0.000px">0</div>
<div class="t" style="left:772.50px;top:213.00px;font-size:14px;color:#262626;letter-spacing:0.000px">0</div>
<div class="t" style="left:829.50px;top:213.00px;font-size:14px;color:#262626;letter-spacing:0.112px">Воспроизвести маршрут</div>
<div class="t" style="left:1041.00px;top:213.00px;font-size:14px;color:#262626;letter-spacing:0.319px">Поделиться</div>
<div class="t" style="left:1170.70px;top:213.00px;font-size:14px;color:#262626;letter-spacing:0.324px">Читатели</div>
<div class="t" style="left:103.00px;top:273.00px;font-size:14px;color:#262626;transform:scaleX(1.1110);transform-origin:0 0;font-weight:bold">02:01:14</div>
<div class="t" style="left:92.80px;top:292.00px;font-size:14px;color:#8a8a8a;letter-spacing:0.181px">Продолжительность</div>
<div class="t" style="left:262.00px;top:276.00px;font-size:10px;color:#555;letter-spacing:0.000px;font-weight:bold">A</div>
<div class="t" style="left:283.80px;top:276.00px;font-size:10px;color:#555;letter-spacing:0.000px;font-weight:bold">B</div>
<div class="t" style="left:306.00px;top:273.00px;font-size:14px;color:#262626;transform:scaleX(1.1150);transform-origin:0 0;font-weight:bold">12.33</div>
<div class="t" style="left:296.30px;top:292.00px;font-size:14px;color:#8a8a8a;letter-spacing:0.298px">Дистанция</div>
<div class="t" style="left:492.94px;top:265.00px;font-size:17px;color:#262626;transform:scaleX(1.0613);transform-origin:0 0;font-weight:bold">115 уд./мин.</div>
<div class="t" style="left:493.80px;top:282.00px;font-size:14px;color:#8a8a8a;letter-spacing:-0.107px">Средняя ЧСС</div>
<div class="t" style="left:492.80px;top:297.00px;font-size:14px;color:#262626;letter-spacing:0.316px">Макс. 156 | Мин. 81</div>
<div class="t" style="left:789.60px;top:271.00px;font-size:17px;color:#262626;transform:scaleX(1.0247);transform-origin:0 0;font-weight:bold">833 кКал</div>
<div class="t" style="left:788.60px;top:289.00px;font-size:14px;color:#8a8a8a;letter-spacing:0.257px">Калории</div>
<div class="t" style="left:987.60px;top:272.00px;font-size:14px;color:#262626;letter-spacing:0.307px">Равномерная</div>
<div class="t" style="left:991.00px;top:292.00px;font-size:14px;color:#262626;letter-spacing:0.184px">тренировка+</div>
<div class="t" style="left:1159.50px;top:281.00px;font-size:15px;color:#35a9da;letter-spacing:-0.457px">меньше</div>
<div class="t" style="left:39.30px;top:347.00px;font-size:14px;color:#262626;letter-spacing:0.209px">Вид спорта</div>
<div class="t" style="left:50.00px;top:377.00px;font-size:14px;color:#262626;letter-spacing:0.263px">Бег</div>
<div class="t" style="left:39.30px;top:412.00px;font-size:14px;color:#262626;letter-spacing:0.078px">Как вы себя чувствуете?</div>
<div class="t" style="left:51.00px;top:442.00px;font-size:14px;color:#262626;letter-spacing:0.055px">Добавить самочувствие</div>
<div class="t" style="left:40.30px;top:477.00px;font-size:14px;color:#262626;letter-spacing:0.116px">Заметки о тренировках</div>
<div class="t" style="left:48.00px;top:512.00px;font-size:14px;color:#c4c4c4;letter-spacing:0.143px">Напишите заметку об этой тренировке</div>
<div class="t" style="left:501.70px;top:371.00px;font-size:17px;color:#262626;transform:scaleX(1.0522);transform-origin:0 0;font-weight:bold">09:49 мин/км</div>
<div class="t" style="left:501.70px;top:388.00px;font-size:14px;color:#8a8a8a;letter-spacing:0.239px">Средний темп</div>
<div class="t" style="left:500.70px;top:403.00px;font-size:14px;color:#262626;letter-spacing:0.018px">Макс. 03:46</div>
<div class="t" style="left:760.80px;top:371.00px;font-size:17px;color:#262626;transform:scaleX(1.0668);transform-origin:0 0;font-weight:bold">69 Шаги/мин</div>
<div class="t" style="left:760.80px;top:388.00px;font-size:14px;color:#8a8a8a;letter-spacing:-0.047px">Средний каденс</div>
<div class="t" style="left:759.80px;top:403.00px;font-size:14px;color:#262626;letter-spacing:0.005px">Макс. 111</div>
<div class="t" style="left:1055.00px;top:374.00px;font-size:14px;color:#262626;letter-spacing:0.114px">Требующая больших</div>
<div class="t" style="left:980.00px;top:394.00px;font-size:14px;color:#262626;letter-spacing:0.145px">затрат сил</div>
<div class="t" style="left:981.00px;top:412.00px;font-size:14px;color:#8e8e8e;letter-spacing:0.081px">Тренировочная нагрузка</div>
<div class="t" style="left:979.00px;top:427.00px;font-size:14px;color:#262626;letter-spacing:0.114px">Нагрузка от этой тренировки 22</div>
<div class="t" style="left:980.00px;top:441.00px;font-size:14px;color:#262626;letter-spacing:-0.256px">часов</div>
<div class="t" style="left:501.70px;top:473.00px;font-size:17px;color:#262626;transform:scaleX(1.0173);transform-origin:0 0;font-weight:bold">45 m</div>
<div class="t" style="left:500.70px;top:490.00px;font-size:14px;color:#8a8a8a;letter-spacing:0.072px">Подъем</div>
<div class="t" style="left:760.90px;top:473.00px;font-size:17px;color:#262626;transform:scaleX(1.0199);transform-origin:0 0;font-weight:bold">35 m</div>
<div class="t" style="left:760.90px;top:490.00px;font-size:14px;color:#8a8a8a;letter-spacing:-0.459px">Спуск</div>
<div class="t" style="left:1018.60px;top:473.00px;font-size:17px;color:#262626;transform:scaleX(0.9681);transform-origin:0 0;font-weight:bold">38 %</div>
<div class="t" style="left:1017.60px;top:490.00px;font-size:14px;color:#7a7a7a;letter-spacing:0.122px">Процент калорий за счет</div>
<div class="t" style="left:1018.60px;top:505.00px;font-size:14px;color:#7a7a7a;letter-spacing:-0.524px">жира</div>
<div class="t" style="left:501.70px;top:539.00px;font-size:17px;color:#262626;transform:scaleX(1.0261);transform-origin:0 0;font-weight:bold">833 кКал</div>
<div class="t" style="left:500.70px;top:556.00px;font-size:14px;color:#8a8a8a;letter-spacing:0.190px">Калории</div>
<div class="t" style="left:22.30px;top:701.00px;font-size:11px;color:#000;letter-spacing:0.344px;font-weight:bold">Пуск</div>
<div class="t" style="left:265.70px;top:701.00px;font-size:11px;color:#000;letter-spacing:0.270px;font-weight:bold">Анализ тренировки - ...</div>
<div class="t" style="left:1082.50px;top:701.00px;font-size:10.5px;color:#fff;letter-spacing:-0.903px">EN</div>
<div class="t" style="left:1241.60px;top:701.00px;font-size:11px;color:#000;letter-spacing:-0.002px">22:06</div>
</body></html>
